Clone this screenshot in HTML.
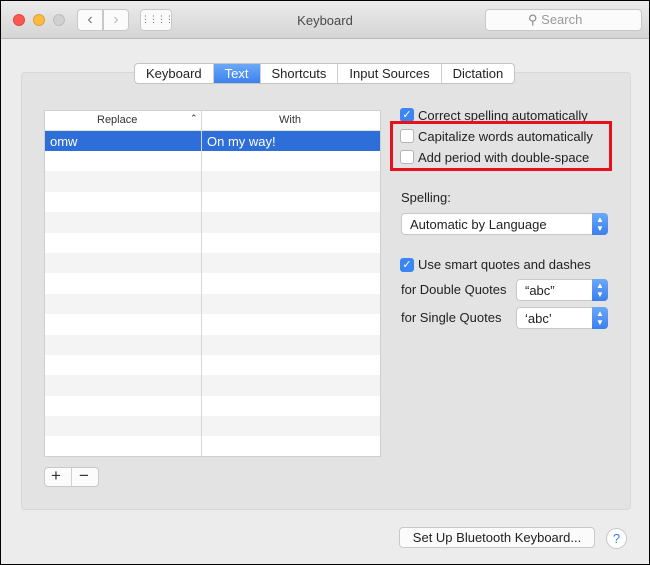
<!DOCTYPE html>
<html><head><style>
*{box-sizing:border-box;margin:0;padding:0}
body{width:650px;height:565px;background:#000;font-family:"Liberation Sans",sans-serif;font-size:13px;color:#222;overflow:hidden;position:relative}
.win{position:absolute;left:1px;top:1px;width:648px;height:563px;background:#ececec;overflow:hidden}
.title{position:absolute;left:0;top:0;width:648px;height:38px;background:linear-gradient(#ebebeb,#d5d5d5);border-bottom:1px solid #b8b8b8}
.dot{position:absolute;top:13px;width:12px;height:12px;border-radius:50%}
.btn{position:absolute;background:#fbfbfb;border:1px solid #c8c8c8;border-radius:4px}
.abs{position:absolute}
.panel{position:absolute;left:20px;top:71px;width:610px;height:438px;background:#e3e3e3;border:1px solid #d8d8d8;border-radius:4px}
.tabs{position:absolute;left:133px;top:62px;height:21px;display:flex;border:1px solid #c4c4c4;border-radius:4px;background:#fff;overflow:hidden}
.tabs div{padding:0 11px;line-height:19px;border-right:1px solid #d0d0d0;font-size:13px}
.tabs div:last-child{border-right:none}
.tabs .on{background:linear-gradient(#6aa8f7,#3b82ef);color:#fff}
.table{position:absolute;left:43px;top:109px;width:337px;height:347px;background:#fff;border:1px solid #cfcfcf;overflow:hidden}
.row{height:20.4px;position:relative}
.row:nth-child(even){background:#f4f4f4}
.cb{position:absolute;width:14px;height:14px;border:1px solid #b5b5b5;border-radius:3px;background:#fff}
.cb.on{background:#3b86f0;border-color:#3b86f0;color:#fff;font-size:11px;line-height:13px;text-align:center}
.sel{position:absolute;background:#fff;border:1px solid #c8c8c8;border-radius:4px;height:22px}
.sel .ar{position:absolute;right:-1px;top:-1px;width:16px;height:22px;background:linear-gradient(#6aa8f7,#3a7fee);border-radius:0 4px 4px 0;color:#fff;font-size:8px;text-align:center;line-height:9px;padding-top:2px}
</style></head><body><div class="win">
<div class="title">
<div class="dot" style="left:12px;background:#fc5753;border:1px solid #df4744"></div>
<div class="dot" style="left:32px;background:#fdbc40;border:1px solid #de9f34"></div>
<div class="dot" style="left:52px;background:#d0d0d0;border:1px solid #bdbdbd"></div>
<div class="btn" style="left:76px;top:8px;width:26px;height:22px;border-radius:4px 0 0 4px;text-align:center;color:#777;font-size:16px;line-height:19px">&#8249;</div>
<div class="btn" style="left:102px;top:8px;width:26px;height:22px;border-radius:0 4px 4px 0;text-align:center;color:#bbb;font-size:16px;line-height:19px">&#8250;</div>
<div class="btn" style="left:139px;top:8px;width:32px;height:22px;text-align:center;color:#666;font-size:9px;line-height:19px;letter-spacing:-1px">&#8942;&#8942;&#8942;&#8942;</div>
<div class="abs" style="left:0;width:648px;top:12px;text-align:center;color:#4a4a4a;font-size:13px">Keyboard</div>
<div class="btn" style="left:484px;top:8px;width:157px;height:22px;border-radius:4px;color:#999;font-size:13px;line-height:20px;padding-left:42px"><span style="font-size:13px;color:#888">&#9906;</span> Search</div>
</div>
<div class="panel"></div>
<div class="tabs"><div>Keyboard</div><div class="on">Text</div><div>Shortcuts</div><div>Input Sources</div><div>Dictation</div></div>
<div class="table">
<div style="height:20px;border-bottom:1px solid #e0e0e0;font-size:11px;color:#333;position:relative;background:#fff">
<span class="abs" style="left:52px;top:3px">Replace</span><span class="abs" style="left:145px;top:2px;font-size:9px">&#8963;</span>
<span class="abs" style="left:234px;top:3px">With</span></div>
<div style="height:20px;background:#2d6ed8;color:#fff;position:relative"><span class="abs" style="left:5px;top:3px">omw</span><span class="abs" style="left:162px;top:3px">On my way!</span></div>
<div>
<div class="row"></div><div class="row"></div><div class="row"></div><div class="row"></div><div class="row"></div><div class="row"></div><div class="row"></div><div class="row"></div><div class="row"></div><div class="row"></div><div class="row"></div><div class="row"></div><div class="row"></div><div class="row"></div><div class="row"></div>
</div>
<div class="abs" style="left:156px;top:0;width:1px;height:347px;background:#d6d6d6"></div>
</div>
<div class="btn" style="left:43px;top:466px;width:55px;height:20px;border-radius:4px"></div>
<div class="abs" style="left:70px;top:467px;width:1px;height:18px;background:#d0d0d0"></div>
<div class="abs" style="left:50px;top:466px;font-size:17px;line-height:18px;color:#333">+</div>
<div class="abs" style="left:78px;top:466px;font-size:17px;line-height:18px;color:#333">&#8722;</div>
<div class="cb on" style="left:399px;top:107px">&#10003;</div>
<div class="abs" style="left:417px;top:107px">Correct spelling automatically</div>
<div class="cb" style="left:399px;top:128px"></div>
<div class="abs" style="left:417px;top:128px">Capitalize words automatically</div>
<div class="cb" style="left:399px;top:149px"></div>
<div class="abs" style="left:417px;top:149px">Add period with double-space</div>
<div class="abs" style="left:389px;top:120px;width:222px;height:50px;border:3px solid #e8101c"></div>
<div class="abs" style="left:400px;top:189px">Spelling:</div>
<div class="sel" style="left:400px;top:212px;width:207px"><span class="abs" style="left:8px;top:3px">Automatic by Language</span><div class="ar">&#9650;<br>&#9660;</div></div>
<div class="cb on" style="left:399px;top:257px">&#10003;</div>
<div class="abs" style="left:417px;top:256px">Use smart quotes and dashes</div>
<div class="abs" style="left:400px;top:281px">for Double Quotes</div>
<div class="sel" style="left:515px;top:278px;width:92px"><span class="abs" style="left:8px;top:3px">“abc”</span><div class="ar">&#9650;<br>&#9660;</div></div>
<div class="abs" style="left:400px;top:309px">for Single Quotes</div>
<div class="sel" style="left:515px;top:306px;width:92px"><span class="abs" style="left:8px;top:3px">‘abc’</span><div class="ar">&#9650;<br>&#9660;</div></div>
<div class="btn" style="left:398px;top:526px;width:196px;height:21px;text-align:center;line-height:19px">Set Up Bluetooth Keyboard...</div>
<div class="abs" style="left:605px;top:527px;width:21px;height:21px;border-radius:50%;background:#fff;border:1px solid #c8c8c8;color:#3a80ee;text-align:center;line-height:19px;font-size:13px">?</div>
</div></body></html>
